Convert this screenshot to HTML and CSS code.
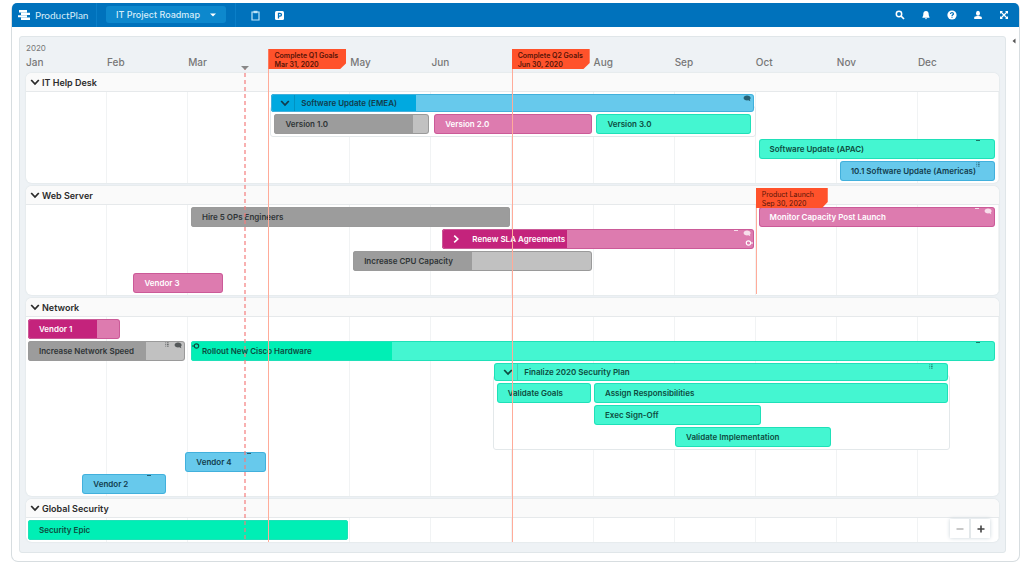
FILE: index.html
```html
<!DOCTYPE html>
<html lang="en">
<head>
<meta charset="utf-8">
<title>IT Project Roadmap</title>
<link rel="stylesheet" href="styles.css">
</head>
<body>
<svg class="defs" aria-hidden="true">
  <symbol id="down" viewBox="0 0 10 8"><path d="M1.2 2 5 6l3.8-4" fill="none" stroke="currentColor" stroke-width="1.8"/></symbol>
  <symbol id="right" viewBox="0 0 10 8"><path d="M3.2 .6 6.8 4 3.2 7.4" fill="none" stroke="currentColor" stroke-width="1.6"/></symbol>
  <symbol id="chat" viewBox="0 0 8 7"><path d="M4 .5c2 0 3.6 1 3.6 2.4 0 .7-.3 1.2-.8 1.6l.6 1.7-2-.9C2.800 5.800.6 4.700.6 2.900.6 1.500 2 .5 4 .5Z" fill="currentColor"/></symbol>
  <symbol id="list" viewBox="0 0 4 6"><path d="M0 1h1M0 3h1M0 5h1M2 1h2M2 3h2M2 5h2" stroke="currentColor" stroke-width="1"/></symbol>
</svg>
<div class="app">
  <header class="topbar">
    <a class="brand" href="#">
      <svg width="13" height="10" viewBox="0 0 13 10"><path d="M1 0h8v2.400H1zM3 2.700h9v2.200H3zM0 5.200h9v2H0zM3 7.500h9V10H3z" fill="#fff"/></svg>
      <span>ProductPlan</span>
    </a>
    <button class="picker"><span>IT Project Roadmap</span><svg width="6" height="4" viewBox="0 0 6 4"><path d="M0 .5h6L3 3.500z" fill="#fff"/></svg></button>
    <div class="tools">
      <button class="icon" aria-label="Clipboard"><svg width="9" height="11" viewBox="0 0 9 11"><path d="M1 2h7v8H1z" fill="none" stroke="#bfe4f7" stroke-width="1.200"/><path d="M2.500 .8h4v2.400h-4z" fill="#bfe4f7"/></svg></button>
      <button class="icon" aria-label="Parking lot"><svg width="9" height="9" viewBox="0 0 9 9"><rect width="9" height="9" rx="1.500" fill="#fff"/><path d="M3.500 7.500V2.300h1.500a1.300 1.300 0 0 1 0 2.900H3.500" fill="none" stroke="#0072bc" stroke-width="1.300"/></svg></button>
    </div>
    <nav class="actions" aria-label="Account">
      <button class="icon" aria-label="Search"><svg width="10" height="10" viewBox="0 0 10 10" fill="none" stroke="#fff"><circle cx="4" cy="4" r="2.700" stroke-width="1.500"/><path d="m6 6 3 3" stroke-width="1.700"/></svg></button>
      <button class="icon" aria-label="Notifications"><svg width="10" height="10" viewBox="0 0 10 10" fill="#fff"><path d="M5 1c2 0 2.700 1.500 2.700 3.200C7.700 6 8.600 6.600 8.600 7.700H1.400C1.400 6.600 2.300 6 2.300 4.200 2.300 2.500 3 1 5 1ZM4 8.200h2a1 1 0 0 1-2 0Z"/></svg></button>
      <button class="icon" aria-label="Help"><svg width="10" height="10" viewBox="0 0 10 10"><circle cx="5" cy="5" r="4.600" fill="#fff"/><path d="M3.500 4C3.500 2 6.600 2.200 6.500 3.900 6.400 4.800 5 4.800 5 6M5 6.700v1.100" fill="none" stroke="#0072bc" stroke-width="1.200"/></svg></button>
      <button class="icon" aria-label="Profile"><svg width="10" height="10" viewBox="0 0 10 10" fill="#fff"><ellipse cx="5" cy="3.200" rx="2" ry="2.500"/><path d="M1.200 9V7.600C1.200 6.400 3 6.200 4 6h2c1 .2 2.800.4 2.800 1.600V9z"/></svg></button>
      <button class="icon" aria-label="Full screen"><svg width="10" height="10" viewBox="0 0 10 10"><path d="m2 2 6 6M8 2 2 8" stroke="#fff" stroke-width="1.200"/><path d="M1 1h3L1 4zM9 1v3L6 1zM1 9V6l3 3zM9 9H6l3-3z" fill="#fff"/></svg></button>
    </nav>
  </header>
  <div class="workspace">
    <main class="canvas">
      <div class="timeline">
        <div class="scale">
          <div class="year">2020</div>
          <div class="months"><span>Jan</span><span>Feb</span><span>Mar</span><span></span><span>May</span><span>Jun</span><span></span><span>Aug</span><span>Sep</span><span>Oct</span><span>Nov</span><span>Dec</span></div>
        </div>
        <div class="lanes">
          <section class="lane">
            <h2><svg class="chev"><use href="#down"/></svg>IT Help Desk</h2>
            <div class="rows">
              <div class="group" style="--s:3;--e:9">
                <div class="row parent"><div class="bar blue" style="--s:3;--e:9"><i class="done" style="width:30%"></i><button class="toggle" aria-label="Collapse"><svg class="chev"><use href="#down"/></svg></button><b>Software Update (EMEA)</b><span class="marks"><svg class="chat"><use href="#chat"/></svg></span></div></div>
                <div class="row"><div class="bar gray" style="--s:3.040;--e:4.990"><i class="done" style="width:90%"></i><b>Version 1.0</b></div><div class="bar pink" style="--s:5.010;--e:7"><b>Version 2.0</b></div><div class="bar green" style="--s:7.010;--e:8.970"><b>Version 3.0</b></div></div>
              </div>
              <div class="row"><div class="bar green" style="--s:9.010;--e:11.970"><b>Software Update (APAC)</b><span class="marks far"><i class="dash"></i></span></div></div>
              <div class="row"><div class="bar blue" style="--s:10.010;--e:11.970"><b>10.1 Software Update (Americas)</b><span class="marks far"><svg class="list"><use href="#list"/></svg></span></div></div>
            </div>
          </section>
          <section class="lane">
            <h2><svg class="chev"><use href="#down"/></svg>Web Server</h2>
            <div class="rows">
              <div class="row"><div class="bar gray" style="--s:2.010;--e:5.990"><i class="done" style="width:100%"></i><b>Hire 5 OPs Engineers</b></div><div class="bar pink" style="--s:9.010;--e:11.970"><b>Monitor Capacity Post Launch</b><span class="marks"><i class="dash"></i><svg class="chat"><use href="#chat"/></svg></span></div></div>
              <div class="row"><div class="bar pink" style="--s:5.110;--e:9"><i class="done" style="width:40%"></i><button class="toggle plain" aria-label="Expand"><svg class="chev"><use href="#right"/></svg></button><b>Renew SLA Agreements</b><span class="marks"><i class="dash"></i><svg class="chat"><use href="#chat"/></svg></span><svg class="link out" viewBox="0 0 9 6"><path d="M6 3h3" stroke="currentColor"/><circle cx="3.500" cy="3" r="2.200" fill="none" stroke="currentColor" stroke-width="1.200"/></svg></div></div>
              <div class="row"><div class="bar gray" style="--s:4.010;--e:7"><i class="done" style="width:50%"></i><b>Increase CPU Capacity</b></div></div>
              <div class="row"><div class="bar pink" style="--s:1.300;--e:2.450"><b>Vendor 3</b></div></div>
            </div>
          </section>
          <section class="lane">
            <h2><svg class="chev"><use href="#down"/></svg>Network</h2>
            <div class="rows">
              <div class="row"><div class="bar pink" style="--s:0;--e:1.180"><i class="done" style="width:75%"></i><b>Vendor 1</b></div></div>
              <div class="row"><div class="bar gray" style="--s:0;--e:1.990"><i class="done" style="width:75%"></i><b>Increase Network Speed</b><span class="marks"><svg class="list"><use href="#list"/></svg><svg class="chat"><use href="#chat"/></svg></span></div><div class="bar green" style="--s:2.010;--e:11.970"><i class="done" style="width:25%"></i><svg class="link in" viewBox="0 0 9 6"><path d="M0 3h3" stroke="currentColor"/><circle cx="5.500" cy="3" r="2.200" fill="none" stroke="currentColor" stroke-width="1.200"/></svg><b>Rollout New Cisco Hardware</b><span class="marks far"><i class="dash"></i></span></div></div>
              <div class="group" style="--s:5.750;--e:11.390">
                <div class="row parent"><div class="bar green" style="--s:5.750;--e:11.390"><button class="toggle" aria-label="Collapse"><svg class="chev"><use href="#down"/></svg></button><b>Finalize 2020 Security Plan</b><span class="marks far"><svg class="list"><use href="#list"/></svg></span></div></div>
                <div class="row"><div class="bar green" style="--s:5.780;--e:6.990"><b>Validate Goals</b></div><div class="bar green" style="--s:6.980;--e:11.390"><b>Assign Responsibilities</b></div></div>
                <div class="row"><div class="bar green" style="--s:6.980;--e:9.090"><b>Exec Sign-Off</b></div></div>
                <div class="row"><div class="bar green" style="--s:7.980;--e:9.950"><b>Validate Implementation</b></div></div>
              </div>
              <div class="row"><div class="bar blue" style="--s:1.940;--e:2.980"><b>Vendor 4</b><span class="marks far"><i class="dash"></i></span></div></div>
              <div class="row"><div class="bar blue" style="--s:0.670;--e:1.750"><b>Vendor 2</b><span class="marks far"><i class="dash"></i></span></div></div>
            </div>
          </section>
          <section class="lane">
            <h2><svg class="chev"><use href="#down"/></svg>Global Security</h2>
            <div class="rows">
              <div class="row"><div class="bar green" style="--s:0;--e:3.990"><i class="done" style="width:100%"></i><b>Security Epic</b></div></div>
            </div>
          </section>
        </div>
        <div class="today" style="--s:2.690"></div>
        <div class="milestone" style="--s:2.990"><p>Complete Q1 Goals<br>Mar 31, 2020</p></div>
        <div class="milestone" style="--s:5.990"><p>Complete Q2 Goals<br>Jun 30, 2020</p></div>
        <div class="milestone launch" style="--s:9"><p>Product Launch<br>Sep 30, 2020</p></div>
        <div class="zoom"><button aria-label="Zoom out" class="minus"><svg width="8" height="8" viewBox="0 0 8 8"><path d="M.5 4h7" stroke="currentColor" stroke-width="1.300"/></svg></button><button aria-label="Zoom in"><svg width="8" height="8" viewBox="0 0 8 8"><path d="M.5 4h7M4 .5v7" stroke="currentColor" stroke-width="1.600"/></svg></button></div>
      </div>
    </main>
    <button class="drawer" aria-label="Open panel"><svg width="4" height="6" viewBox="0 0 4 6"><path d="M3.500 .5v5L.5 3z" fill="#555"/></svg></button>
  </div>
</div>
</body>
</html>
```
FILE: styles.css
```css
* { box-sizing: border-box; }
body { margin: 0; background: #fff; font-family: Inter, "Noto Sans", sans-serif; color: #333; }
button { font: inherit; color: inherit; border: 0; padding: 0; background: none; display: flex; align-items: center; justify-content: center; }
.defs { display: none; }

.app { margin: 3px 4px 5px 11px; border: 1px solid #d7dde0; border-top: 0; border-radius: 7px; background: #fff; }

.topbar { display: flex; align-items: stretch; height: 24px; background: #0072bc; border-radius: 5px 5px 0 0; color: #d5edf9; }
.brand { display: flex; align-items: center; gap: 4px; width: 85px; padding-left: 6px; border-right: 1px solid #0a7fc8; font-family: Lato, sans-serif; font-size: 10px; color: inherit; text-decoration: none; }
.picker { width: 120px; height: 17px; margin: 3px 9px 0 9px; gap: 10px; border-radius: 3px; background: #0d88cd; font-size: 9px; font-weight: 500; }
.tools { display: flex; gap: 14px; align-items: center; padding-left: 14px; border-left: 1px solid #0a7fc8; }
.actions { display: flex; gap: 16px; align-items: center; margin-left: auto; padding-right: 10px; }
.icon { min-width: 10px; }

.workspace { display: flex; align-items: flex-start; padding: 9px 0 8px 7px; }
.canvas { flex: 1; padding: 0 6px 10px 6px; background: #eef2f5; border: 1px solid #e0e6e9; border-radius: 3px; }
.drawer { width: 13px; padding-top: 2px; padding-left: 3px; }

.timeline { position: relative; }
.scale { height: 36px; padding-top: 5px; color: #777; }
.year { font-size: 8px; line-height: 12px; }
.months { display: grid; grid-template-columns: repeat(12, 1fr); font-size: 10px; font-weight: 500; line-height: 16px; }

.lanes { display: flex; flex-direction: column; gap: 3px; }
.lane { background: #fff; border-radius: 6px; box-shadow: 0 0 1px 1px #e6ebee; overflow: hidden; }
.lane h2 { display: flex; align-items: center; gap: 2px; height: 19px; margin: 0; padding-left: 4px; background: #fafafa; border-bottom: 1px solid #e6e9eb; font-size: 9px; font-weight: 600; color: #2b2b2b; }
.chev { width: 10px; height: 8px; }
.rows { display: flex; flex-direction: column; gap: 2px; padding: 2px 0; background: repeating-linear-gradient(to right, transparent 0, transparent calc(100% / 12 - 1px), #f1f3f4 calc(100% / 12 - 1px), #f1f3f4 calc(100% / 12)); }
.row { display: grid; height: 20px; }
.row.parent { height: 18px; }

.bar { --line: #0003; position: relative; grid-area: 1 / 1; display: flex; align-items: center; margin-left: calc(var(--s) / 12 * 100% + 2px); width: calc((var(--e) - var(--s)) / 12 * 100% - 4px); border-radius: 3px; overflow: hidden; background: var(--fill); color: #2f3436; font-size: 8px; white-space: nowrap; }
.bar::after { content: ""; position: absolute; inset: 0; border: 1px solid var(--line); border-radius: 3px; pointer-events: none; }
.bar b { position: relative; padding-left: 11px; font-weight: 600; }
.done { position: absolute; inset: 0 auto 0 0; background: var(--solid); }
.blue { --fill: #67c9ec; --solid: #00a9e0; --line: #42b0dc; color: #123c4c; }
.gray { --fill: #c1c1c1; --solid: #9c9c9c; --line: #9a9a9a; }
.pink { --fill: #dd7baf; --solid: #c4237c; --line: #cb5a98; color: #fff; }
.green { --fill: #44f6d1; --solid: #00efb5; --line: #1fe0b8; color: #0d4c40; }
.toggle { position: relative; width: 24px; height: 100%; padding-left: 5px; border-right: 1px solid #0002; }
.toggle.plain { border-color: transparent; }
.toggle + b { padding-left: 6px; }

.marks { position: absolute; top: 1px; right: 3px; display: flex; gap: 5px; opacity: .75; }
.marks.far { right: 15px; }
.chat { width: 8px; height: 7px; }
.list { width: 4px; height: 5px; }
.dash { width: 4px; height: 1px; background: currentColor; }
.link { position: absolute; width: 9px; height: 6px; }
.link.out { right: 0; bottom: 3px; }
.link.in { left: 0; top: 2px; }

.group { position: relative; display: flex; flex-direction: column; gap: 2px; margin-bottom: 3px; }
.group::before { content: ""; position: absolute; top: 12px; bottom: -3px; left: calc(var(--s) / 12 * 100% + 1px); width: calc((var(--e) - var(--s)) / 12 * 100% - 3px); border: 1px solid #e3e8ea; border-radius: 3px; background: #fff; }

.today { position: absolute; top: 29px; bottom: 0; left: calc(var(--s) / 12 * 100%); width: 2px; background: repeating-linear-gradient(to bottom, #f47c7c99 0, #f47c7c99 4px, transparent 4px, transparent 7px); }
.today::before { content: ""; position: absolute; top: 0; left: -3px; border: 4px solid transparent; border-top-color: #888; border-bottom: 0; }
.milestone { position: absolute; top: 12px; bottom: 0; left: calc(var(--s) / 12 * 100%); width: 1px; background: #ffab99; }
.milestone p { margin: 0; padding: 2px 4px 0 6px; width: 78px; height: 20px; background: #ff522b; clip-path: polygon(0 0, 100% 0, 100% 70%, 92% 100%, 0 100%); color: #571407; font-size: 7px; line-height: 9px; font-weight: 600; white-space: nowrap; }
.milestone.launch { top: 151px; bottom: 248px; }
.launch p { width: 72px; font-weight: 400; }

.zoom { position: absolute; right: 9px; bottom: 4px; display: flex; gap: 2px; box-shadow: 0 0 4px #c9d3d9; background: #e3e8ea; }
.zoom button { width: 19px; height: 19px; background: #fff; color: #444; }
.zoom .minus { color: #aaa; }
```
